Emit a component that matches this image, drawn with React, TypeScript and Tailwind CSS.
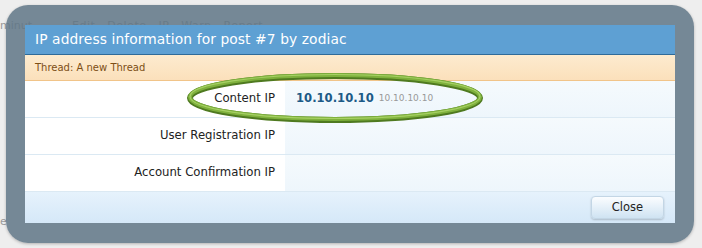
import React from 'react'

const rows = [
  { label: 'Content IP', ip: '10.10.10.10', host: '10.10.10.10' },
  { label: 'User Registration IP' },
  { label: 'Account Confirmation IP' },
]

export default function App() {
  return (
    <div
      className="relative w-[702px] h-[248px] overflow-hidden bg-[#eeeeee]"
      style={{ fontFamily: '"DejaVu Sans", Verdana, sans-serif' }}
    >
      {/* page content behind the overlay */}
      <div className="flex items-center h-[12px] mt-[20px] text-[11px] text-[#9a9a9a] whitespace-nowrap">
        <span>minut</span>
        <span className="ml-[40px] tracking-[0.5px]">Edit&nbsp;&nbsp; Delete&nbsp;&nbsp; IP&nbsp;&nbsp; Warn&nbsp;&nbsp; Report</span>
      </div>
      <div className="mt-[182px] text-[11px] text-[#9a9a9a]">e</div>

      {/* overlay frame */}
      <div className="absolute left-[6px] top-[5px] w-[688px] h-[238px] rounded-[22px] bg-[#5f7586]/85 shadow-[0_1px_3px_rgba(0,0,0,0.25)] px-[19px] pt-[20px]">
        <div className="relative w-[650px] flex flex-col">
          {/* title */}
          <div className="h-[30px] bg-[#5ea0d3] border-b border-[#2f6b99] flex items-center pl-[10px]">
            <h2 className="text-white text-[13.8px] leading-none tracking-[0.1px]">
              IP address information for post #7 by zodiac
            </h2>
          </div>
          {/* thread bar */}
          <div className="h-[26px] bg-gradient-to-b from-[#fdebcf] to-[#fbe0bb] border-b border-[#f1c489] flex items-center pl-[10px]">
            <span className="text-[10px] text-[#7d4f16]">Thread: A new Thread</span>
          </div>
          {/* rows */}
          {rows.map((r) => (
            <div key={r.label} className="flex h-[37px] border-b border-[#dbe9f3]">
              <div className="w-[260px] bg-white flex items-center justify-end pr-[10px]">
                <span className="text-[11.7px] text-[#222]">{r.label}</span>
              </div>
              <div className="flex-1 bg-gradient-to-b from-[#f5fafd] to-[#eef6fc] flex items-center pl-[11px] gap-[5px]">
                {r.ip && (
                  <>
                    <span className="text-[11.6px] font-bold text-[#1c5a87]">{r.ip}</span>
                    <span className="text-[9px] text-[#999]">{r.host}</span>
                  </>
                )}
              </div>
            </div>
          ))}
          {/* footer */}
          <div className="h-[31px] bg-gradient-to-b from-[#e6f2fc] to-[#d5e8f8] flex items-center justify-end pr-[11px]">
            <button className="w-[73px] h-[23px] rounded-[4px] bg-gradient-to-b from-[#fbfdff] to-[#cfe3f2] border border-[#c3d6e5] shadow-[0_1px_2px_rgba(0,0,0,0.2)] text-[11.5px] text-[#222]">
              Close
            </button>
          </div>

          {/* highlight ellipse */}
          <svg
            className="absolute left-[160px] top-[46px] pointer-events-none"
            width="304"
            height="54"
            viewBox="0 0 304 54"
          >
            <ellipse cx="150" cy="27" rx="145" ry="22" fill="none" stroke="#4f7a20" strokeWidth="6" />
            <ellipse cx="150" cy="26" rx="145" ry="22" fill="none" stroke="#7fb13d" strokeWidth="4" />
            <ellipse cx="150" cy="25.5" rx="145" ry="22" fill="none" stroke="#a6d064" strokeWidth="1.2" />
          </svg>
        </div>
      </div>
    </div>
  )
}
